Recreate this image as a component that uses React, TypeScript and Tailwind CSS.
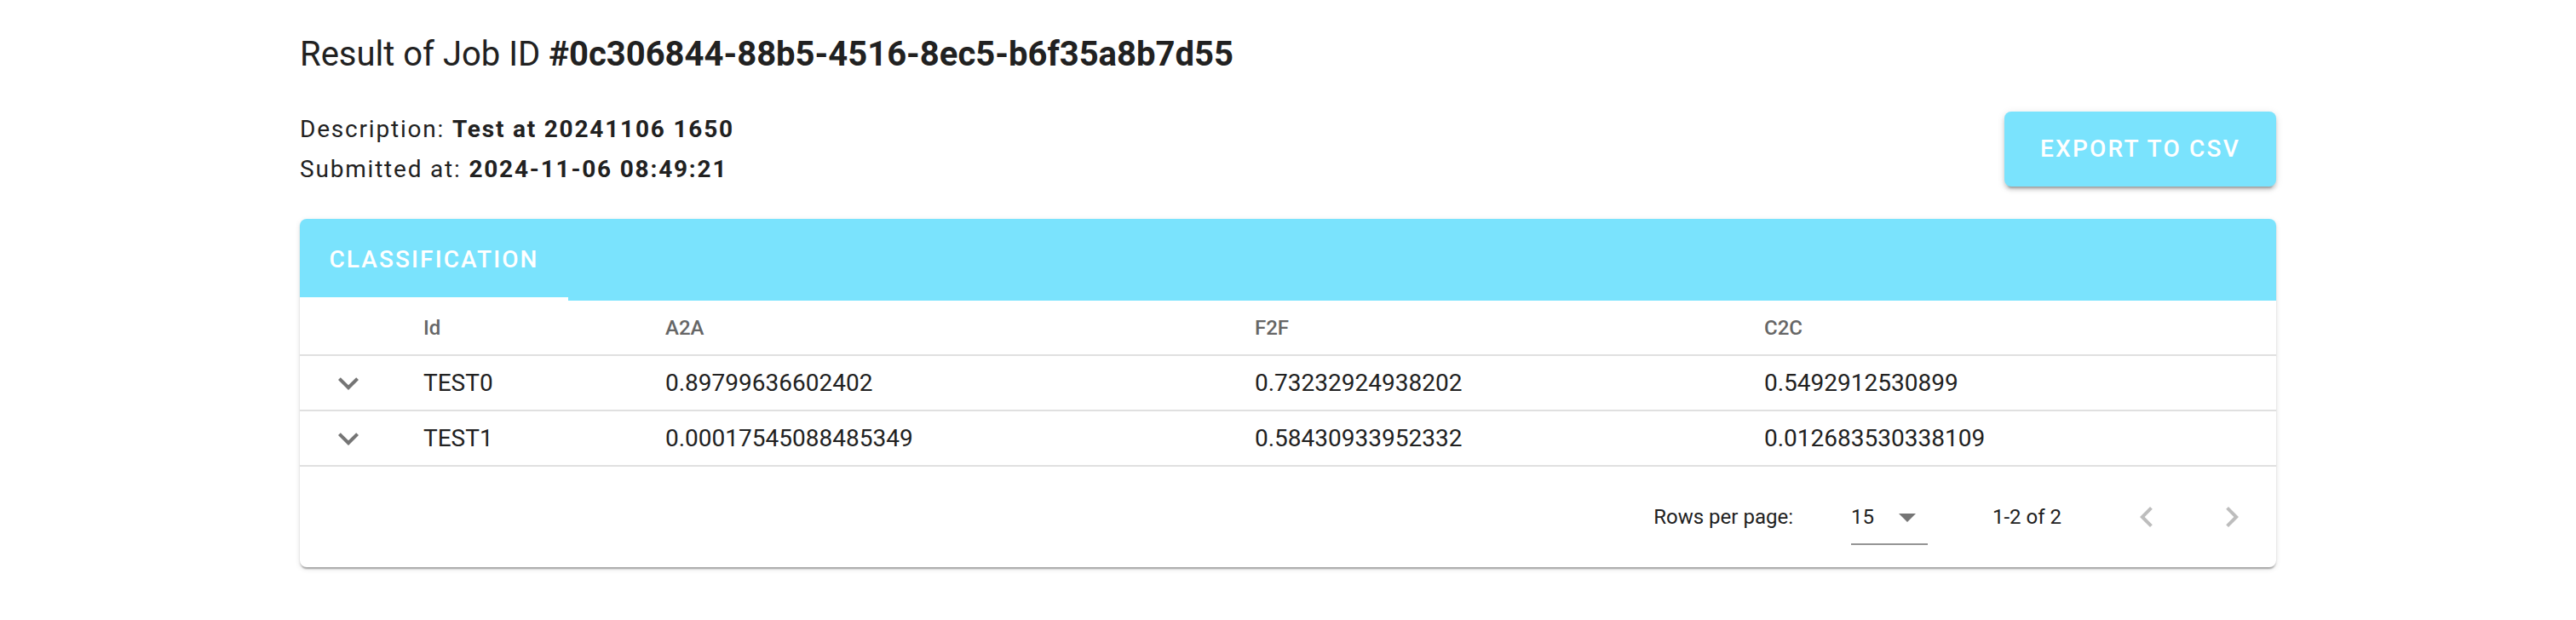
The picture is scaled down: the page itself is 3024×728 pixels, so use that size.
import React from "react";

const rows = [
  { id: "TEST0", a2a: "0.89799636602402", f2f: "0.73232924938202", c2c: "0.5492912530899" },
  { id: "TEST1", a2a: "0.00017545088485349", f2f: "0.58430933952332", c2c: "0.012683530338109" },
];

function ExpandMore() {
  return (
    <svg width="48" height="48" viewBox="0 0 24 24" fill="#757575">
      <path d="M16.59 8.59 12 13.17 7.41 8.59 6 10l6 6 6-6z" />
    </svg>
  );
}

export default function App() {
  return (
    <div className="min-h-screen bg-white font-['Roboto',sans-serif] text-[#212121]">
      <div className="w-[2320px] mx-auto pt-[40px]">
        <h1 className="text-[40px] leading-[48px] font-normal">
          Result of Job ID <span className="font-bold">#0c306844-88b5-4516-8ec5-b6f35a8b7d55</span>
        </h1>
        <div className="flex items-center justify-between mt-[40px]">
          <div className="text-[28px] leading-[47px] tracking-[1.8px]">
            <div>
              Description: <span className="font-bold">Test at 20241106 1650</span>
            </div>
            <div>
              Submitted at: <span className="font-bold">2024-11-06 08:49:21</span>
            </div>
          </div>
          <button className="w-[319px] h-[88px] rounded-[8px] bg-[#7ae3fd] text-white text-[28px] font-medium tracking-[2.2px] uppercase shadow-[0_6px_2px_-4px_rgba(0,0,0,0.2),0_4px_4px_0_rgba(0,0,0,0.14),0_2px_10px_0_rgba(0,0,0,0.12)]">
            Export to CSV
          </button>
        </div>

        <div className="mt-[35px] rounded-[8px] bg-white shadow-[0_4px_2px_-2px_rgba(0,0,0,0.2),0_2px_2px_0_rgba(0,0,0,0.14),0_2px_6px_0_rgba(0,0,0,0.12)]">
          <div className="h-[96px] bg-[#7ae3fd] rounded-t-[8px] flex">
            <div className="relative w-[315px] flex items-center justify-center text-white text-[28px] font-medium tracking-[2.1px]">
              CLASSIFICATION
              <div className="absolute left-0 right-0 bottom-0 h-[4px] bg-white" />
            </div>
          </div>

          <div className="flex items-center h-[65px] border-b-2 border-[#e0e0e0] text-[24px] font-medium text-[#666666]">
            <div className="w-[145px] shrink-0" />
            <div className="w-[284px] shrink-0">Id</div>
            <div className="w-[692px] shrink-0">A2A</div>
            <div className="w-[598px] shrink-0">F2F</div>
            <div className="flex-1">C2C</div>
          </div>

          {rows.map((r) => (
            <div key={r.id} className="flex items-center h-[65px] border-b-2 border-[#e0e0e0] text-[28px]">
              <div className="w-[145px] shrink-0 flex pl-[33px]">
                <ExpandMore />
              </div>
              <div className="w-[284px] shrink-0">{r.id}</div>
              <div className="w-[692px] shrink-0">{r.a2a}</div>
              <div className="w-[598px] shrink-0">{r.f2f}</div>
              <div className="flex-1">{r.c2c}</div>
            </div>
          ))}

          <div className="h-[118px] flex items-center justify-end pr-[28px] text-[24px]">
            <div>Rows per page:</div>
            <div className="ml-[68px] w-[90px] h-[48px] relative flex items-center">
              <span>15</span>
              <svg className="absolute left-[56px] top-[20px]" width="20" height="10" viewBox="0 0 20 10">
                <path d="M0 0 L20 0 L10 10 Z" fill="#757575" />
              </svg>
              <div className="absolute left-0 right-0 bottom-[-9px] h-[2px] bg-[#949494]" />
            </div>
            <div className="ml-[76px]">1-2 of 2</div>
            <div className="ml-[76px] w-[48px] h-[48px]">
              <svg width="48" height="48" viewBox="0 0 24 24" fill="#bdbdbd">
                <path d="M15.41 7.41 14 6l-6 6 6 6 1.41-1.41L10.83 12z" />
              </svg>
            </div>
            <div className="ml-[52px] w-[48px] h-[48px]">
              <svg width="48" height="48" viewBox="0 0 24 24" fill="#bdbdbd">
                <path d="M10 6 8.59 7.41 13.17 12l-4.58 4.59L10 18l6-6z" />
              </svg>
            </div>
          </div>
        </div>
      </div>
    </div>
  );
}
